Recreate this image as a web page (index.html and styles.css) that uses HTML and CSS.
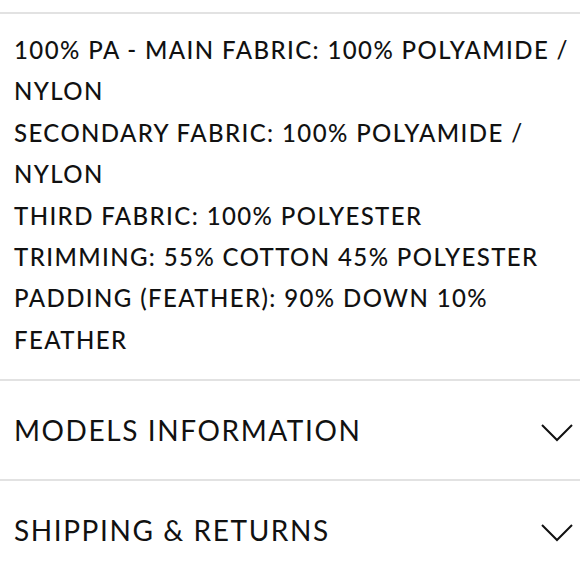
FILE: index.html
```html
<!DOCTYPE html>
<html>
<head>
<meta charset="utf-8">
<link rel="stylesheet" href="styles.css">
</head>
<body>
<div class="panel">
  <div class="composition">
    <p>100% PA - MAIN FABRIC: 100% POLYAMIDE /<br>NYLON</p>
    <p>SECONDARY FABRIC: 100% POLYAMIDE /<br>NYLON</p>
    <p>THIRD FABRIC: 100% POLYESTER</p>
    <p>TRIMMING: 55% COTTON 45% POLYESTER</p>
    <p>PADDING (FEATHER): 90% DOWN 10%<br>FEATHER</p>
  </div>
  <div class="acc-row">
    <span class="acc-title">MODELS INFORMATION</span>
    <svg class="chev" width="32" height="20" viewBox="0 0 32 20"><path d="M1 2 L16 17 L31 2" fill="none" stroke="#111" stroke-width="2"/></svg>
  </div>
  <div class="acc-row">
    <span class="acc-title">SHIPPING &amp; RETURNS</span>
    <svg class="chev" width="32" height="20" viewBox="0 0 32 20"><path d="M1 2 L16 17 L31 2" fill="none" stroke="#111" stroke-width="2"/></svg>
  </div>
</div>
</body>
</html>
```
FILE: styles.css
```css
html, body {
  margin: 0;
  padding: 0;
  background: #fff;
}
body {
  font-family: "Lato", "Noto Sans", sans-serif;
  color: #111;
}
.panel {
  margin-top: 12px;
  border-top: 2px solid #e2e2e2;
}
.composition {
  padding: 15px 14px 19px 14px;
  border-bottom: 2px solid #e2e2e2;
}
.composition p {
  margin: 0;
  font-size: 24px;
  line-height: 41.4px;
  font-weight: 500;
  letter-spacing: 1.4px;
  white-space: nowrap;
}
.acc-row {
  display: flex;
  align-items: center;
  justify-content: space-between;
  height: 98px;
  padding: 0 7px 0 14px;
  border-bottom: 2px solid #e2e2e2;
}
.acc-row:last-child {
  border-bottom: none;
}
.acc-title {
  font-size: 28px;
  font-weight: 400;
  letter-spacing: 1.6px;
}
.chev {
  display: block;
  margin-top: 6px;
}
```
